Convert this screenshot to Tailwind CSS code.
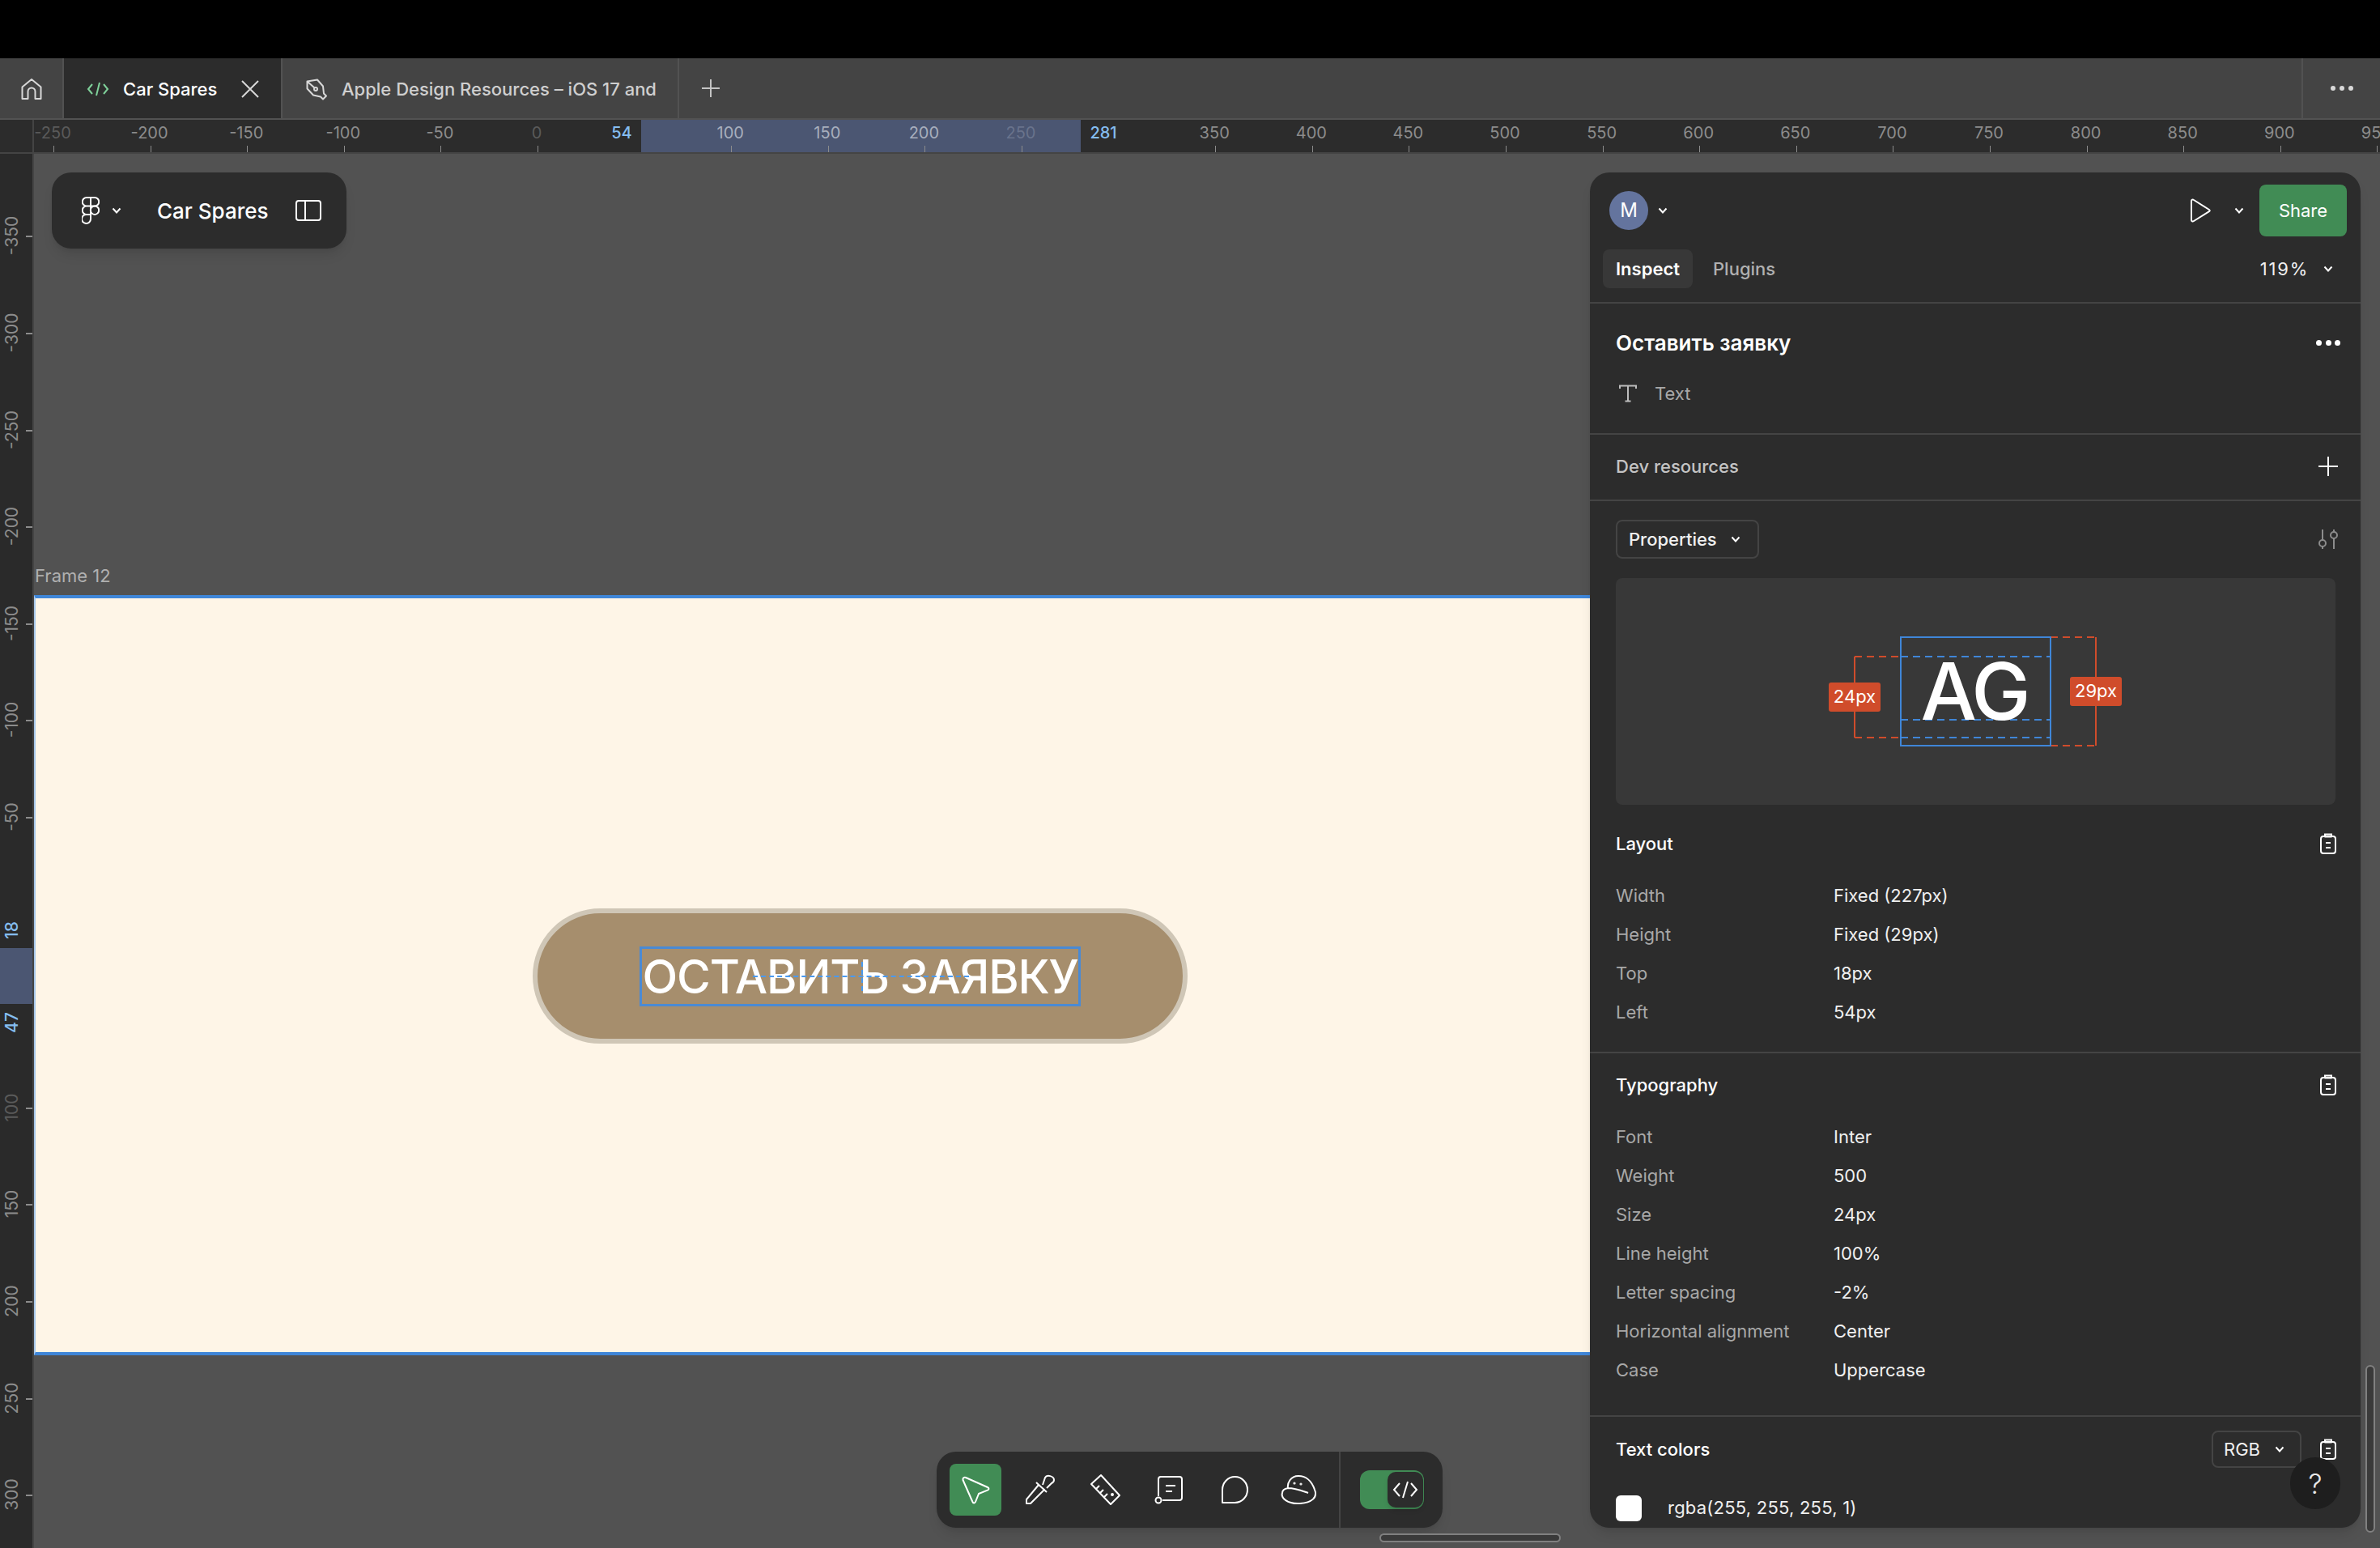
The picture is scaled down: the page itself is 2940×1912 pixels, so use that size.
<!DOCTYPE html>
<html lang="en">
  <head>
    <meta charset="UTF-8" />
    <title>Car Spares</title>
    <script src="https://cdn.jsdelivr.net/npm/@tailwindcss/browser@4"></script>
  </head>
  <body class="bg-[#525252] font-[Inter,sans-serif] text-[22px] text-[#f0f0f0] overflow-hidden">
    <div class="relative w-[2940px] h-[1912px] flex flex-col overflow-hidden">
      <div class="h-[72px] bg-black"></div>

      <!-- tabs -->
      <div class="h-[76px] flex bg-[#444444] border-b-2 border-[#525252]">
        <div class="w-[79px] pt-[2px] flex items-center justify-center border-r-2 border-[#525252]">
          <svg width="26" height="28" viewBox="0 0 26 28" fill="none" stroke="#d8d8d8" stroke-width="2" stroke-linejoin="round"><path d="M1.5 11.5 13 2l11.5 9.5V26h-7v-9a4.5 4.5 0 0 0-9 0v9h-7z"/></svg>
        </div>
        <div class="w-[270px] pt-[2px] flex items-center bg-[#2c2c2c] pl-[28px] border-r-2 border-[#525252]">
          <svg width="28" height="20" viewBox="0 0 28 20" fill="none" stroke="#7fd19a" stroke-width="2"><path d="M7 4 2 10l5 6M21 4l5 6-5 6M16 2l-4 16"/></svg>
          <span class="ml-[17px] font-medium text-white">Car Spares</span>
          <svg class="ml-[30px]" width="22" height="22" viewBox="0 0 22 22" fill="none" stroke="#d8d8d8" stroke-width="2"><path d="M1 1l20 20M21 1 1 21"/></svg>
        </div>
        <div class="w-[490px] pt-[2px] flex items-center pl-[29px] border-r-2 border-[#525252] overflow-hidden">
          <svg class="shrink-0" width="27" height="27" viewBox="0 0 27 27" fill="none" stroke="#d8d8d8" stroke-width="2" stroke-linejoin="round"><path d="M1.5 3.5 14 1.5l7 8 1 9 3 3-4 4-3-3-9-2-7.500-8zM1.500 3.500l9 8"/><circle cx="12" cy="13" r="2"/></svg>
          <span class="ml-[17px] font-medium text-[#cfcfcf] whitespace-nowrap">Apple Design Resources – iOS 17 and</span>
        </div>
        <div class="flex-1 flex items-center pl-[28px]">
          <svg width="22" height="22" viewBox="0 0 22 22" fill="none" stroke="#c4c4c4" stroke-width="2"><path d="M11 0v22M0 11h22"/></svg>
        </div>
        <div class="w-[97px] flex items-center justify-center gap-[5px] border-l-2 border-[#525252]">
          <span class="w-[6px] h-[6px] rounded-full bg-[#d8d8d8]"></span>
          <span class="w-[6px] h-[6px] rounded-full bg-[#d8d8d8]"></span>
          <span class="w-[6px] h-[6px] rounded-full bg-[#d8d8d8]"></span>
        </div>
      </div>

      <!-- horizontal ruler -->
      <div id="rulerX" class="relative h-[42px] bg-[#2c2c2c] border-b-2 border-[#444444] shrink-0">
        <div class="absolute left-[40px] top-0 h-full w-[2px] bg-[#444444]"></div>
        <div class="absolute left-[792px] top-0 h-full w-[543px] bg-[#4b5672]"></div>
      </div>

      <!-- canvas -->
      <div class="relative flex-1 flex">
        <div id="rulerY" class="relative w-[42px] bg-[#2a2a2a] border-r-2 border-[#444444] shrink-0">
          <div class="absolute left-0 top-[981px] w-[40px] h-[69px] bg-[#4b5672]"></div>
        </div>
        <div class="relative flex-1">
          <div class="absolute left-[1px] top-[511px] text-[#b0b0b0] leading-[20px]">Frame 12</div>
          <div class="absolute left-0 top-[545px] w-[2000px] h-[939px] bg-[#fef5e7] border-y-[4px] border-l-2 border-y-[#3f86d8] border-l-[#a9c9ec] flex items-center pl-[614px]">
            <div class="mt-[2px] w-[809px] h-[167px] rounded-full bg-[#a68e6d] border-[6px] border-[#cfc6b6] flex items-center justify-center">
              <div class="relative w-[545px] h-[74px] border-[3px] border-[#4a8ad4] flex items-center justify-center text-white text-[57px] font-medium tracking-[-0.02em] whitespace-nowrap">
                <span class="translate-y-[1px]">ОСТАВИТЬ ЗАЯВКУ</span>
                <div class="absolute left-[137px] right-[135px] top-[33px] border-t-2 border-dashed border-[#4a9af0]"></div>
                <div class="absolute left-[271px] top-[16px] h-[36px] border-l-2 border-dashed border-[#4a9af0]"></div>
              </div>
            </div>
          </div>
        </div>
      </div>

      <!-- file menu -->
      <div class="absolute left-[64px] top-[213px] w-[364px] h-[94px] rounded-[24px] bg-[#2c2c2c] shadow-lg flex items-center pl-[37px]">
        <svg width="22" height="34" viewBox="0 0 22 34" fill="none" stroke="#fff" stroke-width="2"><path d="M11 1H6a5 5 0 0 0 0 10.500h5zM11 1h5a5 5 0 0 1 0 10.500h-5zM11 11.500H6a5 5 0 0 0 0 10.500h5zM11 22H6a5.500 5.500 0 1 0 5 5.500z"/><circle cx="16" cy="16.700" r="5.200"/></svg>
        <svg class="ml-[15px]" width="12" height="8" viewBox="0 0 12 8" fill="none" stroke="#fff" stroke-width="2"><path d="m1.500 1.500 4.500 5 4.500-5"/></svg>
        <span class="ml-[44px] text-[26px] font-medium text-white">Car Spares</span>
        <svg class="ml-[33px]" width="32" height="26" viewBox="0 0 32 26" fill="none" stroke="#fff" stroke-width="2"><rect x="1" y="1" width="30" height="24" rx="3"/><path d="M12 1v24"/></svg>
      </div>

      <!-- inspect panel -->
      <div class="absolute left-[1964px] top-[213px] w-[952px] h-[1674px] rounded-[24px] bg-[#2c2c2c] shadow-lg flex flex-col overflow-hidden">
        <div class="h-[162px] shrink-0 border-b-2 border-[#444444] pt-[15px]">
          <div class="h-[64px] flex items-center pl-[24px] pr-[17px]">
            <div class="w-[48px] h-[48px] rounded-full bg-[#64749e] flex items-center justify-center text-[24px] text-white">M</div>
            <svg class="ml-[12px]" width="12" height="8" viewBox="0 0 12 8" fill="none" stroke="#fff" stroke-width="2"><path d="m1.500 1.500 4.500 5 4.500-5"/></svg>
            <svg class="ml-auto" width="26" height="30" viewBox="0 0 26 30" fill="none" stroke="#fff" stroke-width="2" stroke-linejoin="round"><path d="M2 3.500C2 1.500 3.500 1 5 2l19 12c1 .7 1 1.500 0 2.200L5 28c-1.500 1-3 .5-3-1.500z"/></svg>
            <svg class="ml-[29px]" width="12" height="8" viewBox="0 0 12 8" fill="none" stroke="#fff" stroke-width="2"><path d="m1.500 1.500 4.500 5 4.500-5"/></svg>
            <div class="ml-[19px] w-[108px] h-[64px] rounded-[8px] bg-[#418c55] flex items-center justify-center text-white">Share</div>
          </div>
          <div class="mt-[16px] h-[48px] flex items-center pl-[16px] pr-[34px]">
            <div class="h-[48px] w-[111px] rounded-[8px] bg-[#383838] flex items-center justify-center font-semibold text-white">Inspect</div>
            <div class="ml-[25px] font-medium text-[#b0b0b0]">Plugins</div>
            <div class="ml-auto tracking-[0.08em]">119%</div>
            <svg class="ml-[18px]" width="12" height="8" viewBox="0 0 12 8" fill="none" stroke="#fff" stroke-width="2"><path d="m1.500 1.500 4.500 5 4.500-5"/></svg>
          </div>
        </div>

        <div class="h-[162px] shrink-0 border-b-2 border-[#444444] pl-[32px] pr-[28px]">
          <div class="h-[48px] mt-[24px] flex items-center justify-between">
            <span class="text-[26px] font-semibold text-white">Оставить заявку</span>
            <div class="w-[30px] flex justify-between mr-[-3px]">
              <span class="w-[7px] h-[7px] rounded-full bg-white"></span>
              <span class="w-[7px] h-[7px] rounded-full bg-white"></span>
              <span class="w-[7px] h-[7px] rounded-full bg-white"></span>
            </div>
          </div>
          <div class="h-[40px] mt-[19px] flex items-center">
            <svg class="ml-[4px]" width="22" height="22" viewBox="0 0 22 22" fill="none" stroke="#bdbdbd" stroke-width="2"><path d="M1 5V1.500h20V5M11 1.500V20.500M7.500 20.500h7"/></svg>
            <span class="ml-[22px] text-[#a8a8a8]">Text</span>
          </div>
        </div>

        <div class="h-[82px] shrink-0 border-b-2 border-[#444444] pl-[32px] pr-[28px] pb-[2px] flex items-center justify-between">
          <span class="font-medium text-[#c4c4c4]">Dev resources</span>
          <svg width="24" height="24" viewBox="0 0 24 24" fill="none" stroke="#fff" stroke-width="2"><path d="M12 0v24M0 12h24"/></svg>
        </div>

        <div class="h-[682px] shrink-0 border-b-2 border-[#444444] pl-[32px] pr-[32px] pt-[23px]">
          <div class="flex items-center justify-between">
            <div class="w-[177px] h-[48px] rounded-[8px] border-2 border-[#444444] flex items-center pl-[14px]">
              <span class="font-medium text-[#f0f0f0]">Properties</span>
              <svg class="ml-[17px]" width="12" height="8" viewBox="0 0 12 8" fill="none" stroke="#fff" stroke-width="2"><path d="m1.500 1.500 4.500 5 4.500-5"/></svg>
            </div>
            <svg class="mr-[-4px]" width="24" height="26" viewBox="0 0 24 26" fill="none" stroke="#8c8c8c" stroke-width="2"><path d="M5 1v13M5 22v3M19 1v3M19 12v13"/><circle cx="5" cy="18" r="4"/><circle cx="19" cy="8" r="4"/></svg>
          </div>
          <div class="mt-[24px] w-[889px] h-[280px] rounded-[8px] bg-[#383838] flex items-center justify-center">
            <svg width="365" height="136" viewBox="2258 786 365 136" fill="none" font-family="Inter, sans-serif">
              <g stroke="#d04c2b" stroke-width="2">
                <path stroke-dasharray="9 6" d="M2291 811h56M2291 911h56M2533 787h56M2533 921h56"/>
                <path d="M2291 811v100M2589 787v134"/>
              </g>
              <g stroke="#3f86d8" stroke-width="2">
                <rect x="2348" y="787" width="185" height="134"/>
                <path stroke-dasharray="9 6" d="M2348 811h185M2348 889h185M2348 911h185"/>
              </g>
              <text x="2439" y="889" text-anchor="middle" font-size="98" font-weight="500" letter-spacing="-3" fill="#fff">AG</text>
              <rect x="2259" y="843" width="64" height="36" rx="3" fill="#d04c2b"/>
              <rect x="2557" y="836" width="64" height="36" rx="3" fill="#d04c2b"/>
              <text x="2291" y="868" text-anchor="middle" font-size="22" fill="#fff">24px</text>
              <text x="2589" y="861" text-anchor="middle" font-size="22" fill="#fff">29px</text>
            </svg>
          </div>
          <div class="mt-[24px] h-[48px] flex items-center justify-between">
            <span class="font-medium text-white">Layout</span>
            <svg class="mr-[-2px]" width="20" height="26" viewBox="0 0 20 26" fill="none" stroke="#fff" stroke-width="2"><rect x="1" y="4" width="18" height="21" rx="3"/><path d="M6 4V1.500h8V4M5.500 4.500h9M7 12h6M7 18h6"/></svg>
          </div>
          <div class="mt-[16px] grid grid-cols-[269px_1fr] auto-rows-[48px] items-center">
            <span class="text-[#a8a8a8]">Width</span><span>Fixed (227px)</span>
            <span class="text-[#a8a8a8]">Height</span><span>Fixed (29px)</span>
            <span class="text-[#a8a8a8]">Top</span><span>18px</span>
            <span class="text-[#a8a8a8]">Left</span><span>54px</span>
          </div>
        </div>

        <div class="h-[449px] shrink-0 border-b-2 border-[#444444] pl-[32px] pr-[32px] pt-[15px]">
          <div class="h-[48px] flex items-center justify-between">
            <span class="font-medium text-white">Typography</span>
            <svg class="mr-[-2px]" width="20" height="26" viewBox="0 0 20 26" fill="none" stroke="#fff" stroke-width="2"><rect x="1" y="4" width="18" height="21" rx="3"/><path d="M6 4V1.500h8V4M5.500 4.500h9M7 12h6M7 18h6"/></svg>
          </div>
          <div class="mt-[16px] grid grid-cols-[269px_1fr] auto-rows-[48px] items-center">
            <span class="text-[#a8a8a8]">Font</span><span>Inter</span>
            <span class="text-[#a8a8a8]">Weight</span><span>500</span>
            <span class="text-[#a8a8a8]">Size</span><span>24px</span>
            <span class="text-[#a8a8a8]">Line height</span><span>100%</span>
            <span class="text-[#a8a8a8]">Letter spacing</span><span>-2%</span>
            <span class="text-[#a8a8a8]">Horizontal alignment</span><span>Center</span>
            <span class="text-[#a8a8a8]">Case</span><span>Uppercase</span>
          </div>
        </div>

        <div class="relative flex-1 pl-[32px] pr-[30px]">
          <div class="h-[46px] mt-[17px] flex items-center">
            <span class="font-medium text-white">Text colors</span>
            <div class="ml-auto w-[111px] h-[46px] rounded-[8px] border-2 border-[#444444] flex items-center pl-[13px]">
              <span>RGB</span>
              <svg class="ml-[18px]" width="12" height="8" viewBox="0 0 12 8" fill="none" stroke="#fff" stroke-width="2"><path d="m1.500 1.500 4.500 5 4.500-5"/></svg>
            </div>
            <svg class="ml-[23px]" width="20" height="26" viewBox="0 0 20 26" fill="none" stroke="#fff" stroke-width="2"><rect x="1" y="4" width="18" height="21" rx="3"/><path d="M6 4V1.500h8V4M5.500 4.500h9M7 12h6M7 18h6"/></svg>
          </div>
          <div class="mt-[33px] flex items-center">
            <div class="w-[32px] h-[32px] rounded-[6px] bg-white"></div>
            <span class="ml-[32px] tracking-[0.01em]">rgba(255, 255, 255, 1)</span>
          </div>
          <div class="absolute left-[865px] top-[50px] w-[62px] h-[64px] rounded-full bg-[#1e1e1e] flex items-center justify-center text-[34px] font-light text-[#e8e8e8]">?</div>
        </div>
      </div>

      <!-- scrollbar -->
      <div class="absolute left-[2922px] top-[1686px] w-[12px] h-[207px] rounded-full border-2 border-[#808080] bg-[#3a3a3a]"></div>

      <!-- tools -->
      <div class="absolute left-[1157px] top-[1793px] w-[625px] h-[94px] rounded-[24px] bg-[#2c2c2c] shadow-lg flex items-center pl-[16px]">
        <div class="w-[64px] h-[64px] rounded-[8px] bg-[#418c55] flex items-center justify-center">
          <svg width="38" height="36" viewBox="0 0 38 36" fill="none" stroke="#fff" stroke-width="2" stroke-linejoin="round"><path d="M3.500 6C3 3.500 5 2 7 3l27 12c2 1 2 3-.2 3.600L23 23l-4 10c-.8 2-3.200 2-3.800-.5z"/></svg>
        </div>
        <div class="w-[80px] ml-[8px] flex justify-center">
          <svg width="40" height="40" viewBox="0 0 40 40" fill="none" stroke="#fff" stroke-width="2" stroke-linejoin="round"><path d="M3 37v-5l15-18 7 6L8 37zM15 11l13 12M23 14l3-9c2-4 11-2 11 3 0 2-1 3-3 4l-6 6"/></svg>
        </div>
        <div class="w-[80px] flex justify-center">
          <svg width="40" height="40" viewBox="0 0 40 40" fill="none" stroke="#fff" stroke-width="2" stroke-linejoin="round"><path d="M15 2 38 27 27 38 3 13zM9 19l4-4M14 24l4-4M19 29l4-4"/><circle cx="29" cy="26" r="1"/></svg>
        </div>
        <div class="w-[80px] flex justify-center">
          <svg width="40" height="40" viewBox="0 0 40 40" fill="none" stroke="#fff" stroke-width="2" stroke-linejoin="round"><path d="M6 28V7a3 3 0 0 1 3-3h23a3 3 0 0 1 3 3v23a3 3 0 0 1-3 3H11M15 15h12M15 22h8"/><circle cx="6" cy="33" r="3.500"/></svg>
        </div>
        <div class="w-[80px] flex justify-center">
          <svg width="40" height="40" viewBox="0 0 40 40" fill="none" stroke="#fff" stroke-width="2" stroke-linejoin="round"><path d="M5 36V20a15.500 16 0 1 1 15.500 16z"/></svg>
        </div>
        <div class="w-[80px] flex justify-center">
          <svg width="46" height="40" viewBox="0 0 46 40" fill="none" stroke="#fff" stroke-width="2" stroke-linejoin="round"><path d="M2 24c-2 6 6 14 22 13 14-1 22-7 18-17C38 8 30 3 22 3 12 3 8 12 9 18c-5 1-7 3-7 6zM9 18c9 0 19 4 25 6"/><circle cx="17" cy="12" r=".6"/><circle cx="25" cy="13" r=".6"/></svg>
        </div>
        <div class="ml-[9px] w-[2px] h-full bg-[#444444]"></div>
        <div class="ml-[24px] relative w-[79px] h-[48px] rounded-[12px] bg-[#418c55]">
          <div class="absolute right-[1px] top-[2px] w-[44px] h-[44px] rounded-[10px] bg-[#2c2c2c] shadow-md flex items-center justify-center">
            <svg width="32" height="24" viewBox="0 0 32 24" fill="none" stroke="#fff" stroke-width="2"><path d="M9 4 2 12l7 8M23 4l7 8-7 8M19 2l-6 20"/></svg>
          </div>
        </div>
      </div>

      <div class="absolute left-[1704px] top-[1894px] w-[224px] h-[11px] rounded-full border-2 border-[#808080] bg-[#3a3a3a]"></div>
    </div>

    <script>
      // rulers: 2.392px per design unit at 119%
      const scale = 2.392
      const zeroX = 664
      const zeroY = 1128.5 - 190
      const tint = { 'faint': 'text-[#5a5a5a]', 'sel': 'text-[#a7aebd]', 'selFaint': 'text-[#69738c]', 'mark': 'text-[#85bdf0]', 'norm': 'text-[#8c8c8c]' }

      const rulerX = document.getElementById('rulerX')
      const xLabels = [[-250,'faint'],[-200],[-150],[-100],[-50],[0,'faint'],[100,'sel'],[150,'sel'],[200,'sel'],[250,'selFaint'],[350],[400],[450],[500],[550],[600],[650],[700],[750],[800],[850],[900],[950]]
      xLabels.forEach(([v, kind]) => {
        const x = zeroX + v * scale - 1
        const label = document.createElement('span')
        label.className = 'absolute top-[1px] -translate-x-1/2 text-[20px] leading-[30px] ' + tint[kind || 'norm']
        label.style.left = x + 'px'
        label.textContent = v
        rulerX.appendChild(label)
        const tick = document.createElement('span')
        tick.className = 'absolute bottom-0 w-[1px] h-[8px] bg-[#8c8c8c]'
        tick.style.left = x + 1 + 'px'
        rulerX.appendChild(tick)
      })
      ;[[768, 54], [1363, 281]].forEach(([x, v]) => {
        const label = document.createElement('span')
        label.className = 'absolute top-[1px] -translate-x-1/2 text-[20px] leading-[30px] font-medium text-[#85bdf0]'
        label.style.left = x + 'px'
        label.textContent = v
        rulerX.appendChild(label)
      })

      const rulerY = document.getElementById('rulerY')
      const yLabels = [[-350],[-300],[-250],[-200],[-150],[-100],[-50],[100,'faint'],[150],[200],[250],[300]]
      yLabels.forEach(([v, kind]) => {
        const y = zeroY + v * scale
        const label = document.createElement('span')
        label.className = 'absolute left-[15px] -translate-x-1/2 -translate-y-1/2 -rotate-90 text-[21px] leading-[24px] ' + tint[kind || 'norm']
        label.style.top = y + 'px'
        label.textContent = v
        rulerY.appendChild(label)
        const tick = document.createElement('span')
        tick.className = 'absolute left-[32px] w-[8px] h-[2px] bg-[#8c8c8c]'
        tick.style.top = y + 'px'
        rulerY.appendChild(tick)
      })
      ;[[959, 18], [1073, 47]].forEach(([y, v]) => {
        const label = document.createElement('span')
        label.className = 'absolute left-[15px] -translate-x-1/2 -translate-y-1/2 -rotate-90 text-[21px] leading-[24px] font-medium text-[#85bdf0]'
        label.style.top = y + 'px'
        label.textContent = v
        rulerY.appendChild(label)
      })
    </script>
  </body>
</html>
